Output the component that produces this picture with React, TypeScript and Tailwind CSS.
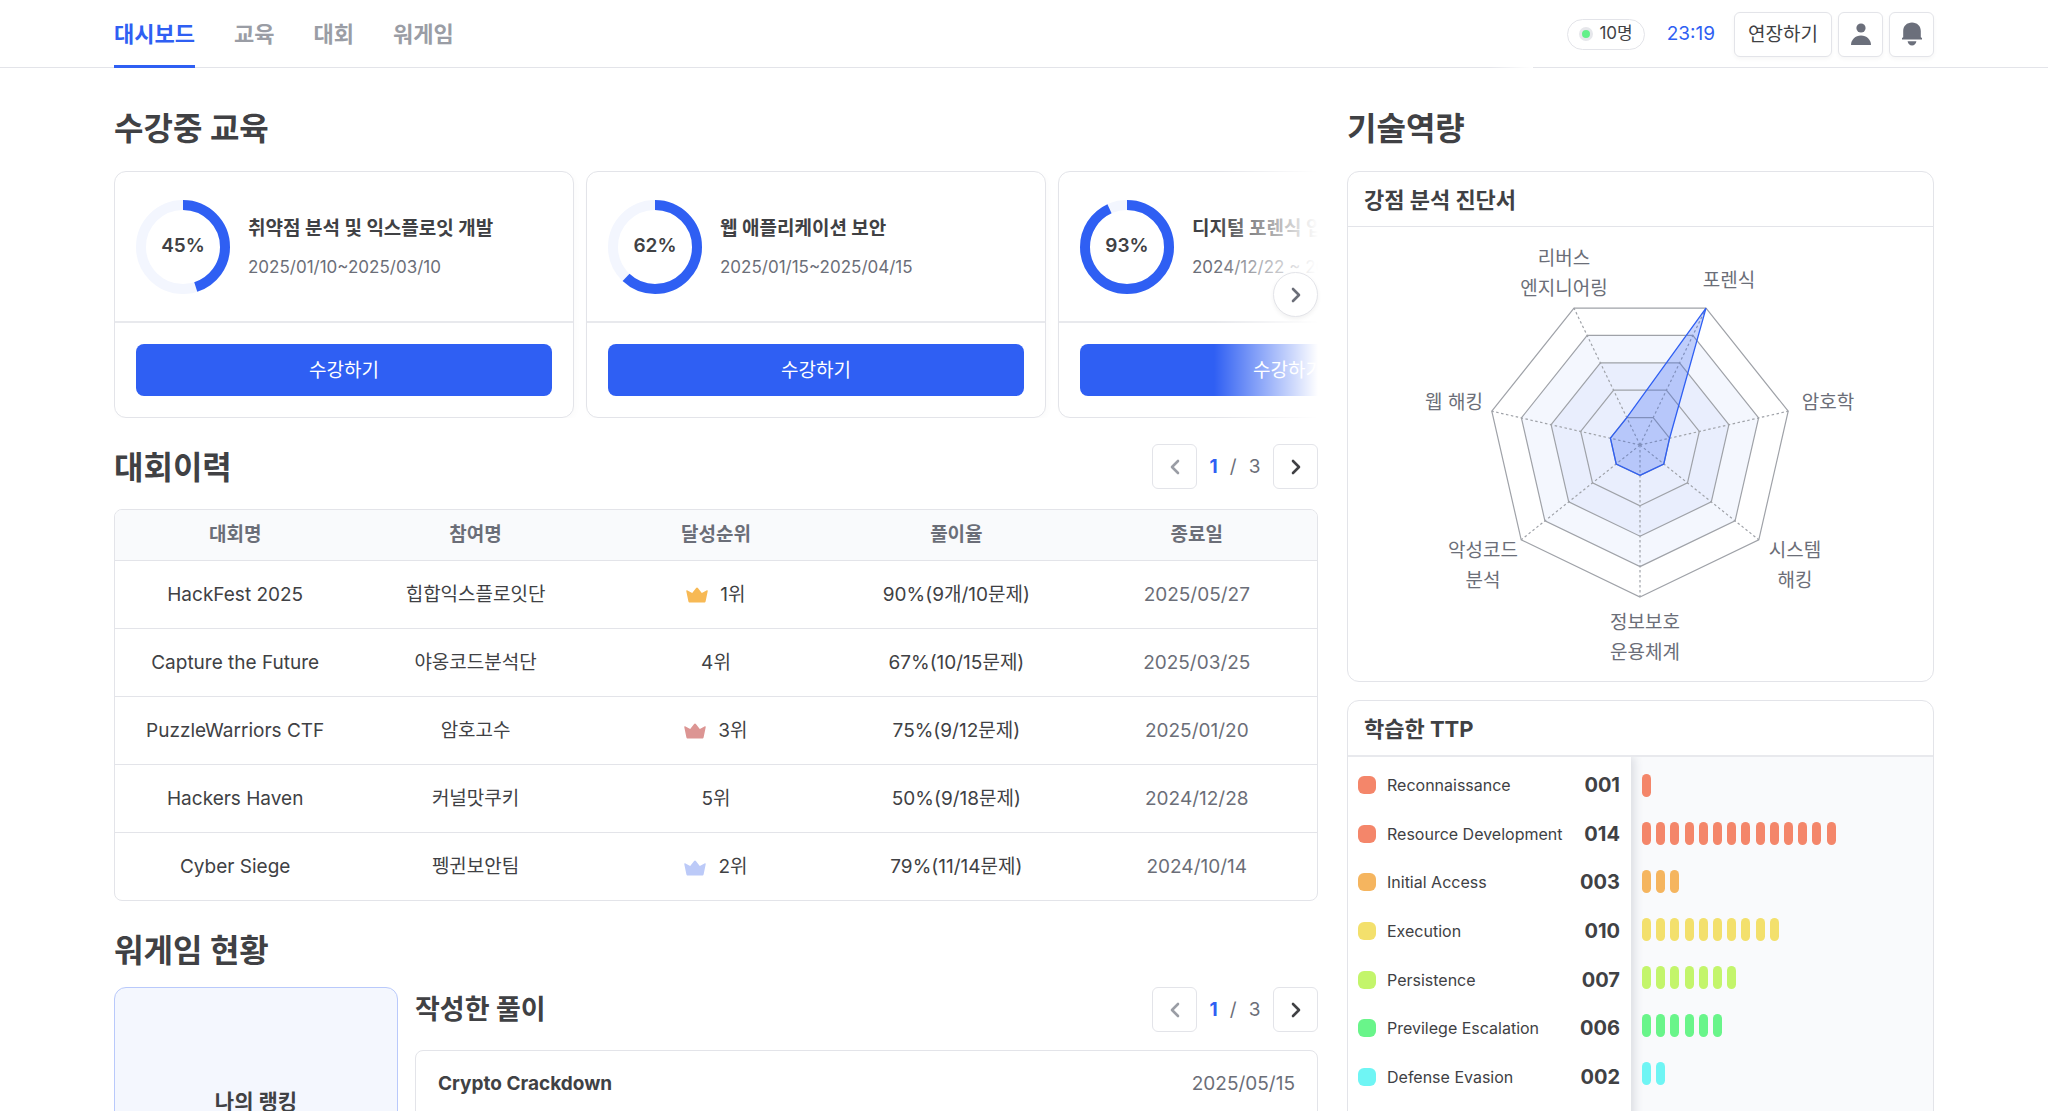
import React from "react";

type Course = { title: string; period: string; percent: number };
type Contest = { name: string; team: string; rank: number; rate: string; end: string };
type Tactic = { label: string; count: number; color: string };

const tabs = ["대시보드", "교육", "대회", "워게임"];

const courses: Course[] = [
  { title: "취약점 분석 및 익스플로잇 개발", period: "2025/01/10~2025/03/10", percent: 45 },
  { title: "웹 애플리케이션 보안", period: "2025/01/15~2025/04/15", percent: 62 },
  { title: "디지털 포렌식 입문", period: "2024/12/22 ~ 2025/03/22", percent: 93 },
];

const contests: Contest[] = [
  { name: "HackFest 2025", team: "힙합익스플로잇단", rank: 1, rate: "90%(9개/10문제)", end: "2025/05/27" },
  { name: "Capture the Future", team: "야옹코드분석단", rank: 4, rate: "67%(10/15문제)", end: "2025/03/25" },
  { name: "PuzzleWarriors CTF", team: "암호고수", rank: 3, rate: "75%(9/12문제)", end: "2025/01/20" },
  { name: "Hackers Haven", team: "커널맛쿠키", rank: 5, rate: "50%(9/18문제)", end: "2024/12/28" },
  { name: "Cyber Siege", team: "펭귄보안팀", rank: 2, rate: "79%(11/14문제)", end: "2024/10/14" },
];

const crownColors: Record<number, string> = {
  1: "text-[#f7b955]",
  2: "text-[#bccaf8]",
  3: "text-[#dc9593]",
};

const tactics: Tactic[] = [
  { label: "Reconnaissance", count: 1, color: "bg-[#f4866a]" },
  { label: "Resource Development", count: 14, color: "bg-[#f4866a]" },
  { label: "Initial Access", count: 3, color: "bg-[#f5b55f]" },
  { label: "Execution", count: 10, color: "bg-[#f3e06c]" },
  { label: "Persistence", count: 7, color: "bg-[#c3f56b]" },
  { label: "Previlege Escalation", count: 6, color: "bg-[#69f58a]" },
  { label: "Defense Evasion", count: 2, color: "bg-[#6ff5f4]" },
];

function Chevron({ dir, className }: { dir: "left" | "right"; className: string }) {
  return (
    <svg
      viewBox="0 0 16 16"
      className={`size-4 ${className}`}
      fill="none"
      stroke="currentColor"
      strokeWidth="2.6"
      strokeLinecap="round"
      strokeLinejoin="round"
      aria-hidden="true"
    >
      <path d={dir === "right" ? "M5 2l6 6-6 6" : "M11 2L5 8l6 6"} />
    </svg>
  );
}

function Crown({ className }: { className: string }) {
  return (
    <svg viewBox="0 0 22 16" className={`h-4 w-[22px] ${className}`} fill="currentColor" aria-hidden="true">
      <path d="M2.3 14 0.3 4.300c-.2-.9.5-1.300 1.200-.9l4.700 2.500 3.900-5c.5-.7 1.300-.7 1.800 0l3.900 5 4.700-2.500c.7-.4 1.400 0 1.200.9l-2 9.700c-.2 1-.7 1.500-1.600 1.500H3.900c-.9 0-1.400-.5-1.600-1.500z" />
    </svg>
  );
}

function Pager() {
  return (
    <div className="flex items-center">
      <button
        type="button"
        aria-label="이전"
        className="flex size-[45px] items-center justify-center rounded-md border border-[#e3e4e9] bg-white"
      >
        <Chevron dir="left" className="text-[#9a9da5]" />
      </button>
      <p className="flex w-[76px] items-center justify-center gap-3 text-[19px] leading-7 text-[#6b6e78]">
        <span className="font-bold text-[#2f5ff3]">1</span>
        <span>/</span>
        <span>3</span>
      </p>
      <button
        type="button"
        aria-label="다음"
        className="flex size-[45px] items-center justify-center rounded-md border border-[#e3e4e9] bg-white"
      >
        <Chevron dir="right" className="text-[#404144]" />
      </button>
    </div>
  );
}

function Ring({ percent }: { percent: number }) {
  const length = 2 * Math.PI * 42;
  return (
    <div className="relative size-[94px] shrink-0">
      <svg viewBox="0 0 94 94" className="size-full -rotate-90" fill="none" strokeWidth="10" aria-hidden="true">
        <circle cx="47" cy="47" r="42" stroke="#f3f6fe" />
        <circle cx="47" cy="47" r="42" stroke="#2f5ff3" strokeDasharray={`${(length * percent) / 100} ${length}`} />
      </svg>
      <span className="absolute inset-0 flex items-center justify-center text-[19px] font-semibold">{percent}%</span>
    </div>
  );
}

function CourseCard({ course }: { course: Course }) {
  return (
    <article className="w-[460px] shrink-0 rounded-xl border border-[#e3e4e9] bg-white shadow-[2px_2px_6px_rgba(0,0,0,0.02)]">
      <div className="flex h-[151px] items-center gap-[18px] border-b-2 border-[#e8e9ed] px-[21px]">
        <Ring percent={course.percent} />
        <div className="whitespace-nowrap">
          <h3 className="text-[19px] leading-7 font-bold">{course.title}</h3>
          <p className="mt-3 text-[17px] leading-6 text-[#6b6e78]">{course.period}</p>
        </div>
      </div>
      <div className="px-[21px] py-[21px]">
        <button type="button" className="h-[52px] w-full rounded-lg bg-[#2f5ff3] pt-0.5 text-[19px] text-white">
          수강하기
        </button>
      </div>
    </article>
  );
}

const center = { x: 292, y: 218 };
const radius = 152;

function vertex(index: number, scale: number): string {
  const angle = Math.PI / 2 - (index * 2 * Math.PI) / 7;
  const x = center.x + radius * scale * Math.cos(angle);
  const y = center.y + radius * scale * Math.sin(angle);
  return `${x.toFixed(1)},${y.toFixed(1)}`;
}

function polygon(values: number[]): string {
  return values.map((value, index) => vertex(index, value)).join(" ");
}

const rings = [
  { scale: 1, fill: "#ffffff" },
  { scale: 0.8, fill: "#f4f7fe" },
  { scale: 0.6, fill: "#e9eefd" },
  { scale: 0.4, fill: "#e9eefd" },
  { scale: 0.2, fill: "#e9eefd" },
];

const axisLabels = [
  { x: 216, y: 32, lines: ["리버스", "엔지니어링"] },
  { x: 381, y: 54, lines: ["포렌식"] },
  { x: 480, y: 176, lines: ["암호학"] },
  { x: 447, y: 324, lines: ["시스템", "해킹"] },
  { x: 297, y: 396, lines: ["정보보호", "운용체계"] },
  { x: 135, y: 324, lines: ["악성코드", "분석"] },
  { x: 106, y: 176, lines: ["웹 해킹"] },
];

function Radar() {
  return (
    <svg viewBox="0 0 585 454" className="w-full" role="img" aria-label="강점 분석 진단서">
      {rings.map((ring) => (
        <polygon key={ring.scale} points={polygon(Array(7).fill(ring.scale))} fill={ring.fill} stroke="#9fa2a8" strokeWidth="1.2" />
      ))}
      {[0, 1, 2, 3, 4, 5, 6].map((index) => (
        <polyline
          key={index}
          points={`${center.x},${center.y} ${vertex(index, 1)}`}
          stroke="#9fa2a8"
          strokeWidth="1.2"
          strokeDasharray="2.5 2.5"
          fill="none"
        />
      ))}
      <polygon
        points={polygon([0.2, 0.2, 0.2, 1, 0.2, 0.2, 0.2])}
        fill="#2f5ff3"
        fillOpacity="0.27"
        stroke="#2f5ff3"
        strokeWidth="1.3"
      />
      <g className="fill-[#6b6e78] text-[19px]" textAnchor="middle">
        {axisLabels.map((label) =>
          label.lines.map((line, index) => (
            <text key={line} x={label.x} y={label.y + index * 30 + 6}>
              {line}
            </text>
          )),
        )}
      </g>
    </svg>
  );
}

export default function App() {
  return (
    <div className="h-screen overflow-hidden bg-white font-['Inter','Noto_Sans_CJK_KR',sans-serif] text-[#404144]">
      <header className="border-b border-[#e3e4e9]">
        <div className="relative mx-auto flex h-[67px] max-w-[1820px] items-stretch justify-between">
          <nav className="flex gap-[39px]">
            {tabs.map((tab, index) => (
              <a
                key={tab}
                href="#"
                className={
                  index === 0
                    ? "-mb-px flex items-center border-b-3 border-[#2f5ff3] pt-1 text-[22px] font-bold text-[#2f5ff3]"
                    : "flex items-center pt-0.5 text-[22px] font-bold text-[#9a9da5]"
                }
              >
                {tab}
              </a>
            ))}
          </nav>
          <div className="flex items-center pt-px">
            <p className="flex h-[31px] items-center gap-[6px] rounded-full border border-[#e3e4e9] px-[11px] text-[17px]">
              <span className="size-[14px] rounded-full border-3 border-[#e6e7eb] bg-[#62f089]" />
              10명
            </p>
            <time className="mr-[19px] ml-[22px] text-[19px] text-[#2f5ff3]">23:19</time>
            <button
              type="button"
              className="h-[45px] w-[98px] rounded-md border border-[#e3e4e9] bg-white pt-0.5 text-[19px] shadow-[0_2px_4px_rgba(0,0,0,0.04)]"
            >
              연장하기
            </button>
            <button
              type="button"
              aria-label="내 정보"
              className="ml-[6px] flex size-[45px] items-center justify-center rounded-md border border-[#e3e4e9] bg-white text-[#6b6f7b] shadow-[0_2px_4px_rgba(0,0,0,0.04)]"
            >
              <svg viewBox="0 0 24 24" className="size-6" fill="currentColor" aria-hidden="true">
                <circle cx="12" cy="6" r="4.6" />
                <path d="M2 23c0-5.200 4.400-9.400 10-9.400S22 17.800 22 23z" />
              </svg>
            </button>
            <button
              type="button"
              aria-label="알림"
              className="ml-[6px] flex size-[45px] items-center justify-center rounded-md border border-[#e3e4e9] bg-white text-[#6b6f7b] shadow-[0_2px_4px_rgba(0,0,0,0.04)]"
            >
              <svg viewBox="0 0 24 24" className="size-6" fill="currentColor" aria-hidden="true">
                <path d="M12 .5C6.900.5 3.200 4 3.200 9v6.300L2 16v1.500h20V16l-1.200-.7V9C20.800 4 17.100.5 12 .5z" />
                <path d="M7.600 19.200h8.800c-.4 2.400-2.100 4.200-4.400 4.200s-4-1.800-4.400-4.200z" />
              </svg>
            </button>
          </div>
          <span className="absolute right-[401px] -bottom-px h-px w-11 bg-linear-to-r from-white/0 to-white" />
        </div>
      </header>

      <main className="mx-auto grid max-w-[1820px] grid-cols-[minmax(0,1fr)_587px] gap-[29px] pt-[37px]">
        <div>
          <section>
            <h2 className="text-[32px] leading-[48px] font-bold">수강중 교육</h2>
            <div className="relative mt-[18px]">
              <div className="flex gap-3 overflow-hidden">
                {courses.map((course) => (
                  <CourseCard key={course.title} course={course} />
                ))}
              </div>
              <div className="pointer-events-none absolute inset-y-0 right-0 w-[104px] bg-linear-to-r from-white/0 to-white" />
              <button
                type="button"
                aria-label="다음 교육"
                className="absolute top-[101px] right-0 flex size-[45px] items-center justify-center rounded-full border border-[#e3e4e9] bg-white shadow-[0_2px_4px_rgba(0,0,0,0.06)]"
              >
                <Chevron dir="right" className="text-[#6b6e78]" />
              </button>
            </div>
          </section>

          <section className="mt-[26px]">
            <div className="flex items-start justify-between">
              <h2 className="text-[32px] leading-[48px] font-bold">대회이력</h2>
              <Pager />
            </div>
            <div className="mt-[17px] overflow-hidden rounded-lg border border-[#e3e4e9]">
              <table className="w-full table-fixed text-center text-[19px]">
                <thead className="bg-[#f9fafc] text-[#6b6e78]">
                  <tr className="h-[50px]">
                    <th className="font-bold">대회명</th>
                    <th className="font-bold">참여명</th>
                    <th className="font-bold">달성순위</th>
                    <th className="font-bold">풀이율</th>
                    <th className="font-bold">종료일</th>
                  </tr>
                </thead>
                <tbody>
                  {contests.map((contest) => (
                    <tr key={contest.name} className="h-[68px] border-t border-[#e3e4e9]">
                      <td className="pt-0.5">{contest.name}</td>
                      <td className="pt-0.5">{contest.team}</td>
                      <td className="pt-0.5">
                        <span className="inline-flex items-center gap-3 align-middle">
                          {crownColors[contest.rank] && <Crown className={crownColors[contest.rank]} />}
                          {contest.rank}위
                        </span>
                      </td>
                      <td className="pt-0.5">{contest.rate}</td>
                      <td className="pt-0.5 text-[#6b6e78]">{contest.end}</td>
                    </tr>
                  ))}
                </tbody>
              </table>
            </div>
          </section>

          <section className="mt-[26px]">
            <h2 className="text-[32px] leading-[48px] font-bold">워게임 현황</h2>
            <div className="mt-3 grid grid-cols-[284px_minmax(0,1fr)] gap-[17px]">
              <div className="h-80 rounded-xl border border-[#b9c9fb] bg-[#f4f7fe] pt-[100px] text-center text-[21px] leading-7 font-bold">
                나의 랭킹
              </div>
              <div>
                <div className="flex items-center justify-between">
                  <h3 className="text-[27px] leading-10 font-bold">작성한 풀이</h3>
                  <Pager />
                </div>
                <div className="mt-[18px] h-60 rounded-lg border border-[#e3e4e9] px-[22px]">
                  <div className="flex h-[66px] items-center justify-between text-[19px]">
                    <span className="font-bold">Crypto Crackdown</span>
                    <span className="text-[#6b6e78]">2025/05/15</span>
                  </div>
                </div>
              </div>
            </div>
          </section>
        </div>

        <aside>
          <h2 className="text-[32px] leading-[48px] font-bold">기술역량</h2>
          <section className="mt-[18px] rounded-xl border border-[#e3e4e9]">
            <h3 className="flex h-[55px] items-center border-b border-[#e3e4e9] px-4 pt-0.5 text-[22px] font-bold">
              강점 분석 진단서
            </h3>
            <Radar />
          </section>

          <section className="mt-[18px] overflow-hidden rounded-xl border border-[#e3e4e9]">
            <h3 className="flex h-[56px] items-center border-b-2 border-[#e8e9ed] px-4 pt-0.5 text-[22px] font-bold">
              학습한 TTP
            </h3>
            <div className="flex h-[400px] overflow-hidden bg-[#f9fafc]">
              <div className="w-[283px] shrink-0 bg-white pt-1 pr-[11px] pl-[10px] shadow-[4px_0_8px_rgba(60,65,85,0.14)]">
                <ul className="grid h-[340px] grid-rows-7">
                  {tactics.map((tactic) => (
                    <li key={tactic.label} className="flex items-center">
                      <span className={`size-[18px] rounded-md ${tactic.color}`} />
                      <span className="ml-[11px] flex-1 text-base whitespace-nowrap">{tactic.label}</span>
                      <span className="text-[20px] font-bold">{String(tactic.count).padStart(3, "0")}</span>
                    </li>
                  ))}
                </ul>
              </div>
              <div className="flex-1 pt-1 pr-[7px] pl-[11px]">
                {tactics.map((tactic) => (
                  <div key={tactic.label} className="grid h-12 grid-cols-20 items-center">
                    {Array.from({ length: tactic.count }, (_, index) => (
                      <span key={index} className={`h-[23px] w-[9px] rounded-full ${tactic.color}`} />
                    ))}
                  </div>
                ))}
              </div>
            </div>
          </section>
        </aside>
      </main>
    </div>
  );
}
